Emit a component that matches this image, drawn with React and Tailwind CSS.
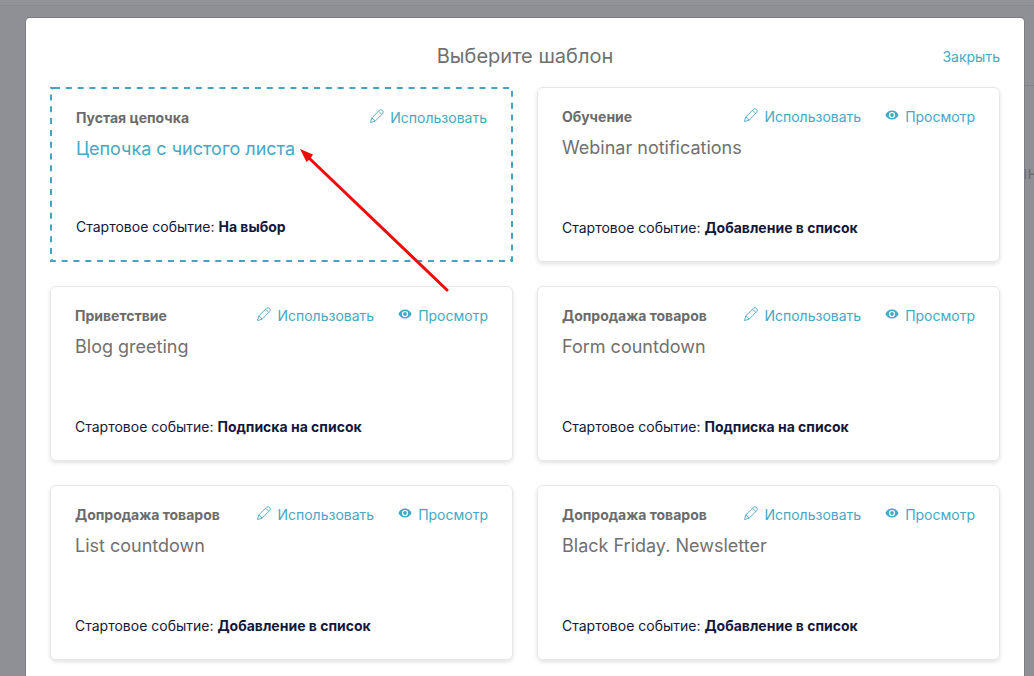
import React, { useState } from 'react'

const templates = [
  { id: 1, category: 'Обучение', name: 'Webinar notifications', event: 'Добавление в список' },
  { id: 2, category: 'Приветствие', name: 'Blog greeting', event: 'Подписка на список' },
  { id: 3, category: 'Допродажа товаров', name: 'Form countdown', event: 'Подписка на список' },
  { id: 4, category: 'Допродажа товаров', name: 'List countdown', event: 'Добавление в список' },
  { id: 5, category: 'Допродажа товаров', name: 'Black Friday. Newsletter', event: 'Добавление в список' }
]

const PencilIcon = () => (
  <svg
    viewBox="1 1 14 14"
    className="w-3.5 h-3.5 mb-1"
    fill="none"
    stroke="currentColor"
    strokeWidth="0.9"
    strokeLinejoin="round"
    aria-hidden="true"
  >
    <path d="M1.500 14.500 2.700 10 10.600 2.200Q12 1 13.500 2.400 15 4 13.800 5.400L6 13.300Z" />
    <path d="M9.600 3.200 12.800 6.400M2.700 10Q4.900 10.900 6 13.300" />
  </svg>
)

const EyeIcon = () => (
  <svg viewBox="0 0 14 12" className="w-3.5 h-3 mb-1" aria-hidden="true">
    <path
      fill="currentColor"
      fillRule="evenodd"
      d="M7 1.4C3.9 1.4 1.4 3.3.4 6c1 2.7 3.5 4.6 6.6 4.6s5.6-1.9 6.6-4.6C12.6 3.3 10.1 1.4 7 1.4ZM7 9.1a3.1 3.1 0 1 1 0-6.2 3.1 3.1 0 0 1 0 6.2Z"
    />
    <circle cx="7" cy="6" r="1.9" fill="currentColor" />
  </svg>
)

const ActionButton = ({ icon, children }) => (
  <button type="button" className="flex items-center gap-1.5 text-[#45a9c4] hover:underline cursor-pointer">
    {icon}
    <span>{children}</span>
  </button>
)

const StartEvent = ({ children }) => (
  <p className="text-[#14183a]">
    Стартовое событие: <b className="font-bold">{children}</b>
  </p>
)

const TemplateCard = ({ template }) => (
  <article className="flex flex-col justify-between min-h-[175px] px-6 pt-[19px] pb-[23px] border border-gray-200 rounded-md shadow-[0_2px_4px_rgb(0_0_0/0.12)]">
    <div>
      <div className="flex items-center justify-between">
        <h3 className="font-bold text-[#6b6b6b]">{template.category}</h3>
        <div className="flex gap-6">
          <ActionButton icon={<PencilIcon />}>Использовать</ActionButton>
          <ActionButton icon={<EyeIcon />}>Просмотр</ActionButton>
        </div>
      </div>
      <p className="mt-[9px] text-lg leading-6 text-[#707070]">{template.name}</p>
    </div>
    <StartEvent>{template.event}</StartEvent>
  </article>
)

// Blank chain, always first in the grid
const EmptyCard = () => (
  <article className="relative flex flex-col justify-between min-h-[175px] px-6 pt-[19px] pb-[23px] border-2 border-transparent rounded-md">
    {/* CSS dashes are too tight, so the outline is stroked here */}
    <svg className="absolute -inset-0.5 w-[calc(100%+4px)] h-[calc(100%+4px)] pointer-events-none" aria-hidden="true">
      <rect
        width="100%"
        height="100%"
        rx="4"
        fill="none"
        stroke="#45a2c0"
        strokeWidth="4"
        strokeDasharray="6 5.82"
      />
    </svg>
    <div>
      <div className="flex items-center justify-between">
        <h3 className="font-bold text-[#6b6b6b]">Пустая цепочка</h3>
        <ActionButton icon={<PencilIcon />}>Использовать</ActionButton>
      </div>
      <p className="mt-[9px] text-lg leading-6 text-[#45a9c4]">Цепочка с чистого листа</p>
    </div>
    <StartEvent>На выбор</StartEvent>

    {/* Arrow pointing at the blank chain */}
    <svg
      viewBox="0 0 152 146"
      className="absolute top-[59px] left-[247px] z-10 w-[152px] h-[146px] pointer-events-none"
      aria-hidden="true"
    >
      <path d="M10 10 148 142" stroke="#f00a0a" strokeWidth="3" strokeLinecap="round" />
      <path d="M1 1 14 6.5 11.5 10.5 7.5 14Z" fill="#f00a0a" />
    </svg>
  </article>
)

// Dimmed page under the dialog
const PageBehind = () => (
  <div className="absolute inset-0 overflow-hidden text-right bg-[#8f9096]" aria-hidden="true">
    <div className="h-1.5 bg-[#929399] border-b border-[#88898f]" />
    <div className="h-20 ml-16 border-b border-[#838489]" />
    <div className="mt-[75px] -mr-1 text-lg leading-6 text-[#6c6d72]">ын</div>
  </div>
)

const App = () => {
  const [isOpen, setIsOpen] = useState(true)

  return (
    <div className="relative min-h-screen font-['Inter','Liberation_Sans',sans-serif] text-sm leading-5">
      <PageBehind />
      {isOpen && (
        <div className="relative pt-[18px] pl-[26px] pr-2.5">
          <section
            role="dialog"
            aria-labelledby="dialog-title"
            className="px-6 pt-6 pb-4 bg-white rounded-t-sm ring-1 ring-[#7c7d85]"
          >
            <header className="grid grid-cols-[1fr_auto_1fr] items-center mb-[17px]">
              <h2 id="dialog-title" className="col-start-2 text-xl leading-7 text-[#707070]">
                Выберите шаблон
              </h2>
              <button
                type="button"
                onClick={() => setIsOpen(false)}
                className="justify-self-end pt-0.5 text-[#45a9c4] hover:underline cursor-pointer"
              >
                Закрыть
              </button>
            </header>
            <div className="grid grid-cols-2 gap-6">
              <EmptyCard />
              {templates.map(template => (
                <TemplateCard key={template.id} template={template} />
              ))}
            </div>
          </section>
        </div>
      )}
    </div>
  )
}

export default App
